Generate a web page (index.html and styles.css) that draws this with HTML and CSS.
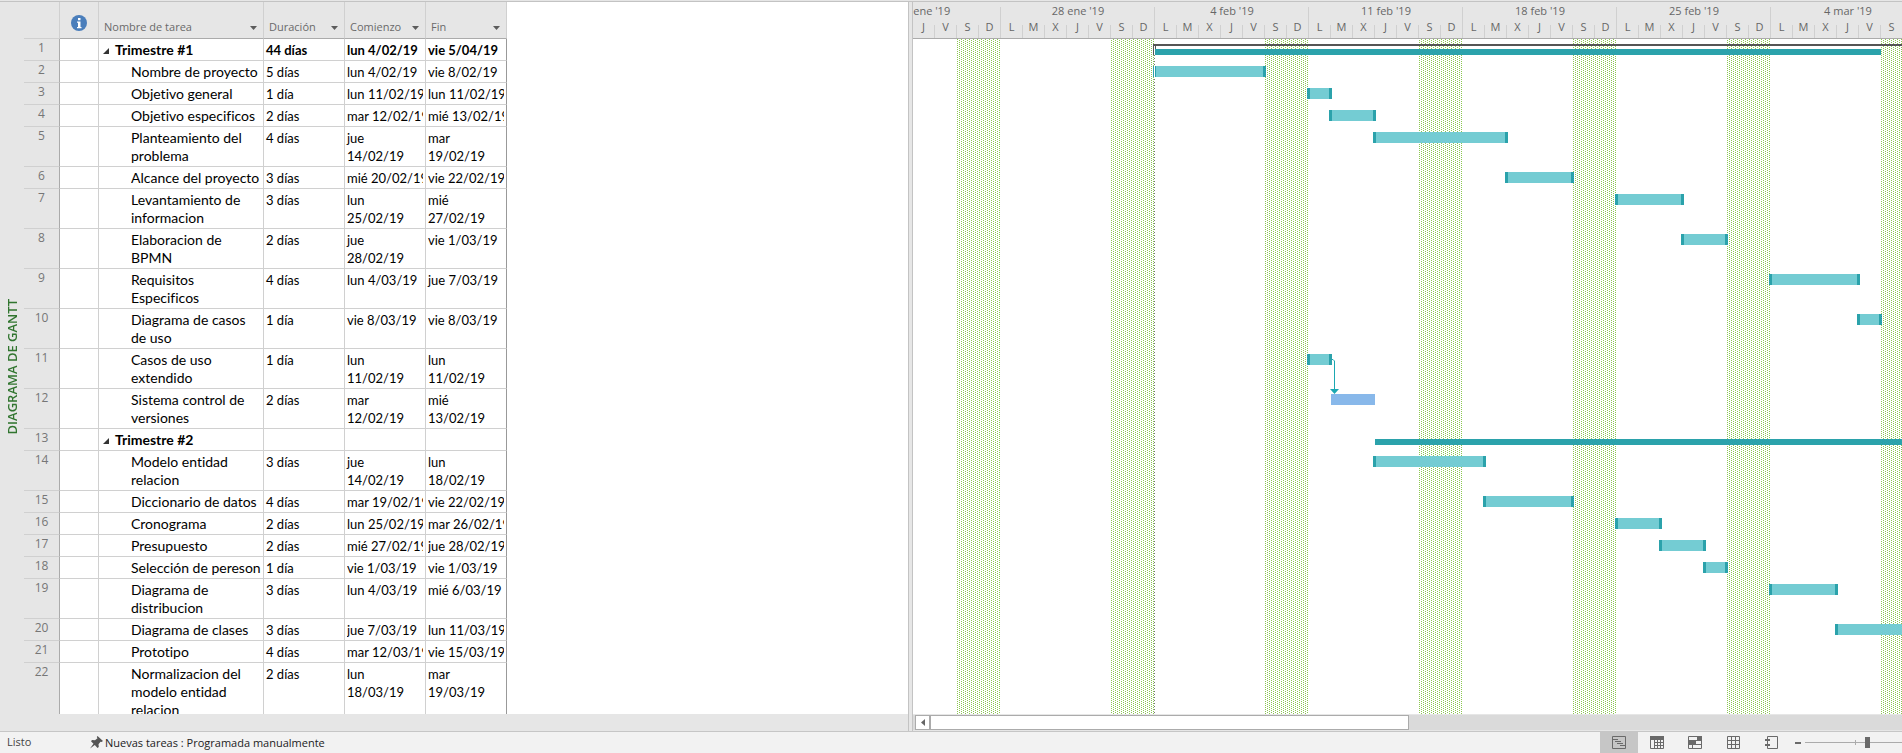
FILE: index.html
```html
<!DOCTYPE html>
<html lang="es">
<head>
<meta charset="utf-8">
<title>Diagrama de Gantt</title>
<link rel="stylesheet" href="styles.css">
</head>
<body>
<main class="workspace">
  <section class="sheet">
    <div class="view-name"><span>DIAGRAMA DE GANTT</span></div>
    <div class="table-pane">
      <table class="tasks">
        <colgroup><col class="col-id"><col class="col-info"><col class="col-name"><col class="col-date"><col class="col-date"><col class="col-date"></colgroup>
        <thead>
          <tr>
            <th></th>
            <th class="info"><svg width="16" height="16" viewBox="0 0 16 16" role="img" aria-label="Indicadores"><circle cx="8" cy="8" r="8" fill="#4a7ebb"/><path d="M7 3h2.500v2.300H7zM6 6.500h3.500v5.500h1v1.200H6V12h1V7.700H6z" fill="#fff"/></svg></th>
            <th><button class="head">Nombre de tarea<svg width="7" height="4"><path d="M0 0h7L3.500 4z"/></svg></button></th>
            <th><button class="head">Duración<svg width="7" height="4"><path d="M0 0h7L3.500 4z"/></svg></button></th>
            <th><button class="head">Comienzo<svg width="7" height="4"><path d="M0 0h7L3.500 4z"/></svg></button></th>
            <th><button class="head">Fin<svg width="7" height="4"><path d="M0 0h7L3.500 4z"/></svg></button></th>
          </tr>
        </thead>
        <tbody>
          <tr class="single summary"><th>1</th><td></td><td><svg class="fold" width="6" height="6"><path d="M6 0v6H0z"/></svg>Trimestre #1</td><td>44 días</td><td>lun 4/02/19</td><td>vie 5/04/19</td></tr>
          <tr class="single"><th>2</th><td></td><td><div>Nombre de proyecto</div></td><td>5 días</td><td><div>lun 4/02/19</div></td><td><div>vie 8/02/19</div></td></tr>
          <tr class="single"><th>3</th><td></td><td><div>Objetivo general</div></td><td>1 día</td><td><div>lun 11/02/19</div></td><td><div>lun 11/02/19</div></td></tr>
          <tr class="single"><th>4</th><td></td><td><div>Objetivo especificos</div></td><td>2 días</td><td><div>mar 12/02/19</div></td><td><div>mié 13/02/19</div></td></tr>
          <tr><th>5</th><td></td><td>Planteamiento del problema</td><td>4 días</td><td>jue 14/02/19</td><td>mar 19/02/19</td></tr>
          <tr class="single"><th>6</th><td></td><td><div>Alcance del proyecto</div></td><td>3 días</td><td><div>mié 20/02/19</div></td><td><div>vie 22/02/19</div></td></tr>
          <tr><th>7</th><td></td><td>Levantamiento de informacion</td><td>3 días</td><td>lun 25/02/19</td><td>mié 27/02/19</td></tr>
          <tr><th>8</th><td></td><td>Elaboracion de BPMN</td><td>2 días</td><td>jue 28/02/19</td><td>vie 1/03/19</td></tr>
          <tr><th>9</th><td></td><td>Requisitos Especificos</td><td>4 días</td><td>lun 4/03/19</td><td>jue 7/03/19</td></tr>
          <tr><th>10</th><td></td><td>Diagrama de casos de uso</td><td>1 día</td><td>vie 8/03/19</td><td>vie 8/03/19</td></tr>
          <tr><th>11</th><td></td><td>Casos de uso extendido</td><td>1 día</td><td>lun 11/02/19</td><td>lun 11/02/19</td></tr>
          <tr><th>12</th><td></td><td>Sistema control de versiones</td><td>2 días</td><td>mar 12/02/19</td><td>mié 13/02/19</td></tr>
          <tr class="single summary"><th>13</th><td></td><td><svg class="fold" width="6" height="6"><path d="M6 0v6H0z"/></svg>Trimestre #2</td><td></td><td></td><td></td></tr>
          <tr><th>14</th><td></td><td>Modelo entidad relacion</td><td>3 días</td><td>jue 14/02/19</td><td>lun 18/02/19</td></tr>
          <tr class="single"><th>15</th><td></td><td><div>Diccionario de datos</div></td><td>4 días</td><td><div>mar 19/02/19</div></td><td><div>vie 22/02/19</div></td></tr>
          <tr class="single"><th>16</th><td></td><td><div>Cronograma</div></td><td>2 días</td><td><div>lun 25/02/19</div></td><td><div>mar 26/02/19</div></td></tr>
          <tr class="single"><th>17</th><td></td><td><div>Presupuesto</div></td><td>2 días</td><td><div>mié 27/02/19</div></td><td><div>jue 28/02/19</div></td></tr>
          <tr class="single"><th>18</th><td></td><td><div>Selección de pereson</div></td><td>1 día</td><td><div>vie 1/03/19</div></td><td><div>vie 1/03/19</div></td></tr>
          <tr><th>19</th><td></td><td>Diagrama de distribucion</td><td>3 días</td><td>lun 4/03/19</td><td>mié 6/03/19</td></tr>
          <tr class="single"><th>20</th><td></td><td><div>Diagrama de clases</div></td><td>3 días</td><td><div>jue 7/03/19</div></td><td><div>lun 11/03/19</div></td></tr>
          <tr class="single"><th>21</th><td></td><td><div>Prototipo</div></td><td>4 días</td><td><div>mar 12/03/19</div></td><td><div>vie 15/03/19</div></td></tr>
          <tr><th>22</th><td></td><td>Normalizacion del modelo entidad relacion</td><td>2 días</td><td>lun 18/03/19</td><td>mar 19/03/19</td></tr>
        </tbody>
      </table>
    </div>
    <div class="sheet-foot"></div>
  </section>

  <div class="splitter"></div>

  <section class="chart">
    <div class="timescale">
      <div class="week"><b>21 ene '19</b><i>L</i><i>M</i><i>X</i><i>J</i><i>V</i><i>S</i><i>D</i></div>
      <div class="week"><b>28 ene '19</b><i>L</i><i>M</i><i>X</i><i>J</i><i>V</i><i>S</i><i>D</i></div>
      <div class="week"><b>4 feb '19</b><i>L</i><i>M</i><i>X</i><i>J</i><i>V</i><i>S</i><i>D</i></div>
      <div class="week"><b>11 feb '19</b><i>L</i><i>M</i><i>X</i><i>J</i><i>V</i><i>S</i><i>D</i></div>
      <div class="week"><b>18 feb '19</b><i>L</i><i>M</i><i>X</i><i>J</i><i>V</i><i>S</i><i>D</i></div>
      <div class="week"><b>25 feb '19</b><i>L</i><i>M</i><i>X</i><i>J</i><i>V</i><i>S</i><i>D</i></div>
      <div class="week"><b>4 mar '19</b><i>L</i><i>M</i><i>X</i><i>J</i><i>V</i><i>S</i><i>D</i></div>
    </div>
    <div class="plot">
      <div class="weekends"></div>
      <div class="start-line"></div>
      <div class="lane"><div class="project"></div><div class="total" style="--day:11;--days:33"></div></div>
      <div class="lane"><div class="bar first" style="--day:11;--days:5"></div></div>
      <div class="lane"><div class="bar" style="--day:18;--days:1"></div></div>
      <div class="lane"><div class="bar" style="--day:19;--days:2"></div></div>
      <div class="lane tall"><div class="bar" style="--day:21;--days:6"></div></div>
      <div class="lane"><div class="bar" style="--day:27;--days:3"></div></div>
      <div class="lane tall"><div class="bar" style="--day:32;--days:3"></div></div>
      <div class="lane tall"><div class="bar" style="--day:35;--days:2"></div></div>
      <div class="lane tall"><div class="bar" style="--day:39;--days:4"></div></div>
      <div class="lane tall"><div class="bar" style="--day:43;--days:1"></div></div>
      <div class="lane tall"><div class="bar" style="--day:18;--days:1"><svg class="link" width="12" height="36" viewBox="-4 0 12 36"><path d="M0 .5h1l1.500 1.500V31" fill="none" stroke="#1ba8b2"/><path d="M-2 30h9L2.500 35z" fill="#1ba8b2"/></svg></div></div>
      <div class="lane tall"><div class="bar manual" style="--day:19;--days:2"></div></div>
      <div class="lane"><div class="total" style="--day:21;--days:40"></div></div>
      <div class="lane tall"><div class="bar" style="--day:21;--days:5"></div></div>
      <div class="lane"><div class="bar" style="--day:26;--days:4"></div></div>
      <div class="lane"><div class="bar" style="--day:32;--days:2"></div></div>
      <div class="lane"><div class="bar" style="--day:34;--days:2"></div></div>
      <div class="lane"><div class="bar" style="--day:36;--days:1"></div></div>
      <div class="lane tall"><div class="bar" style="--day:39;--days:3"></div></div>
      <div class="lane"><div class="bar" style="--day:42;--days:5"></div></div>
    </div>
    <div class="scroller">
      <button aria-label="Anterior"><svg width="4" height="7"><path d="M4 0v7L0 3.500z"/></svg></button>
      <div class="thumb"></div>
      <button class="next" aria-label="Siguiente"><svg width="4" height="7"><path d="M0 0v7l4-3.500z"/></svg></button>
    </div>
  </section>
</main>

<footer class="status">
  <span class="ready">Listo</span>
  <button class="mode"><svg width="13" height="13" viewBox="0 0 13 13"><path d="M7.500 0 13 5l-1.500 1-1-.3L8.500 8.300 8.800 11 7.500 12 4.800 9 0 12.500 3.500 7.800 1 5.200l1-1.200 3 .2 2.500-2L6.800 1z" fill="#555"/></svg>Nuevas tareas : Programada manualmente</button>
  <nav class="views">
    <button class="on" aria-label="Diagrama de Gantt"><svg width="14" height="13"><path d="M.5.500h13v12H.5zM1 3.500h5M3 5.500h6M5 7.500h6M8 9.500h5"/></svg></button>
    <button aria-label="Uso de tareas"><svg width="14" height="13"><path d="M.5.500h13v12H.5zM4.500 4v9M7.500 4v9M10.500 4v9M4 6.500h10M4 9.500h10"/><path class="solid" d="M0 0h14v4H0z"/></svg></button>
    <button aria-label="Organizador de equipo"><svg width="14" height="13"><path d="M.5.500h13v12H.5zM1 4.500h12M1 8.500h12M4.500 9v4"/><path class="solid" d="M9 0h5v5H9zM0 4h8v5H0z"/></svg></button>
    <button aria-label="Hoja de recursos"><svg width="13" height="13"><path d="M.5.500h12v12H.5zM4.500 0v13M8.500 0v13M0 4.500h13M0 8.500h13"/></svg></button>
    <button aria-label="Informe"><svg width="13" height="13"><path d="M2.500.500h10v12h-10z"/><path class="solid" d="M0 3h5v2H0zM0 8h5v2H0z"/></svg></button>
  </nav>
  <button class="minus" aria-label="Alejar"></button>
  <input class="zoom" type="range" min="0" max="100" value="65" aria-label="Zoom">
</footer>
</body>
</html>
```
FILE: styles.css
```css
* { box-sizing: border-box; }
body {
  margin: 0;
  height: 100vh;
  display: flex;
  flex-direction: column;
  overflow: hidden;
  background: #e6e6e6;
  color: #000;
  font: 11px "Open Sans", "Noto Sans", sans-serif;
  font-variant-ligatures: none;
}
button { border: 0; padding: 0; background: none; color: inherit; font: inherit; }
svg { display: block; flex: none; }

.workspace {
  flex: 1;
  min-height: 0;
  margin-top: 1px;
  border-top: 1px solid #c3c3c3;
  border-bottom: 1px solid #c6c6c6;
  display: grid;
  grid-template: minmax(0, 1fr) / minmax(0, 909px) 3px minmax(0, 1fr);
}

/* Task sheet */
.sheet {
  display: grid;
  grid-template: minmax(0, 1fr) 17px / 24px minmax(0, 1fr);
  border-right: 1px solid #c3c3c3;
}
.view-name { grid-row: span 2; display: grid; place-items: center; color: #31752f; font-size: 13px; font-weight: 600; }
.view-name span { writing-mode: vertical-rl; transform: rotate(180deg); white-space: nowrap; }
.table-pane { overflow: hidden; background: #fff; }
.tasks { table-layout: fixed; width: 483px; border-spacing: 0; }
.col-id { width: 36px; }
.col-info { width: 39px; }
.col-name { width: 165px; }
.col-date { width: 81px; }
.tasks thead th {
  height: 37px;
  padding: 0;
  background: #e6e6e6;
  border-right: 1px solid #d0d0d0;
  border-bottom: 1px solid #ababab;
  font-weight: 400;
  color: #6a6a6a;
}
.tasks thead th:first-child { border-bottom-color: #d0d0d0; }
.info svg { margin: 6px auto 0; }
.head { display: flex; align-items: center; justify-content: space-between; width: 100%; padding: 12px 6px 0 5px; }
.head svg { fill: #5c5c5c; margin-top: 4px; }
.tasks tbody th {
  padding: 0;
  background: #e6e6e6;
  border-right: 1px solid #ababab;
  border-bottom: 1px solid #d0d0d0;
  font: 12px/18px "Open Sans", sans-serif;
  color: #767676;
  text-align: center;
  vertical-align: top;
}
.tasks td {
  padding: 2px 2px 1px 2px;
  border-right: 1px solid #d0d0d0;
  border-bottom: 1px solid #d0d0d0;
  font-family: Lato, "Open Sans", sans-serif;
  font-size: 13px;
  line-height: 18px;
  vertical-align: top;
}
.tasks td:nth-child(3) { padding-left: 32px; font-size: 14px; }
.tasks td:last-child { border-right-color: #999; }
.tasks td div { overflow: hidden; }
.tasks .single td { white-space: nowrap; }
.tasks .summary td { font-weight: 700; }
.tasks .summary td:nth-child(3) { padding-left: 4px; }
.fold { display: inline-block; margin-right: 6px; vertical-align: 1px; fill: #333; }

/* Chart */
.splitter { background: #e6e6e6; }
.chart {
  display: grid;
  grid-template-rows: 37px minmax(0, 1fr) 17px;
  border-left: 1px solid #c3c3c3;
  overflow: hidden;
}
.timescale { display: flex; margin-left: -66px; border-bottom: 1px solid #ababab; color: #666; }
.week {
  flex: none;
  display: grid;
  grid-template: 19px 13px / repeat(7, 22px);
  padding-top: 4px;
  text-align: center;
  background: linear-gradient(#d0d0d0, #d0d0d0) right bottom / 1px 31px no-repeat;
}
.week b { grid-column: span 7; font-weight: 400; line-height: 9px; }
.week i { font-style: normal; line-height: 3px; border-right: 1px solid #d0d0d0; }
.plot { position: relative; background: #fff; overflow: hidden; }
.weekends {
  position: absolute;
  inset: 0;
  background:
    conic-gradient(from 0deg at 1px 1px, transparent 75%, #8cc751 0) 0 0 / 4px 2px,
    conic-gradient(from 0deg at 1px 1px, transparent 75%, #8cc751 0) 2px 1px / 4px 2px;
  mask: repeating-linear-gradient(90deg, transparent 0 44px, #000 44px 87px, transparent 87px 154px);
}
.start-line {
  position: absolute;
  top: 16px;
  bottom: 0;
  left: 241px;
  width: 1px;
  background: repeating-linear-gradient(#777 0 1px, #fff 1px 3px);
}
.lane { position: relative; height: 22px; padding-top: 5px; }
.lane.tall { height: 40px; }
.bar {
  position: relative;
  height: 11px;
  margin-left: calc(var(--day) * 22px - 2px);
  width: calc(var(--days) * 22px + 3px);
  background: #74ccd3;
  border: solid #2ba2ab;
  border-width: 0 3px;
}
.bar.first { border-left: 0; background: linear-gradient(90deg, #2ba2ab 1px, #fff 1px 2px, #2ba2ab 2px 3px, #74ccd3 3px); }
.bar.manual { border: 0; background: #88b8ea; margin-left: calc(var(--day) * 22px); width: calc(var(--days) * 22px); }
.total {
  position: relative;
  height: 6px;
  margin: 5px 0 0 calc(var(--day) * 22px);
  width: calc(var(--days) * 22px);
  background: #2ba2ab;
}
.project {
  position: absolute;
  top: 5px;
  left: 240px;
  right: 0;
  height: 11px;
  border-top: 2px solid #555;
  background: linear-gradient(90deg, #555 1px, #fff 1px 2px, #555 2px 3px, transparent 3px);
}
.link { position: absolute; left: calc(100% - 1px); top: 5px; overflow: visible; }

.scroller { display: flex; padding: 1px 0 1px 2px; background: linear-gradient(#dadada, #dadada) 0 1px / 100% 15px no-repeat #e6e6e6; }
.scroller button, .thumb { background: #fff; border: 1px solid #ababab; }
.scroller button { width: 15px; display: grid; place-items: center; }
.scroller svg { fill: #666; }
.thumb { width: 479px; }
.scroller .next { margin-left: auto; }

/* Status bar */
.status { flex: none; height: 21px; display: flex; background: #f2f2f2; color: #444; line-height: 19px; }
.ready { width: 90px; padding-left: 7px; }
.mode { display: flex; align-items: center; gap: 2px; color: #222; }
.views { display: flex; margin-left: auto; }
.views button { width: 38px; display: grid; place-items: center; }
.views .on { background: #c6c6c6; }
.views svg { fill: none; stroke: #6a6a6a; }
.views .solid { fill: #6a6a6a; stroke: none; }
.minus { width: 12px; margin-right: 3px; background: linear-gradient(#6a6a6a, #6a6a6a) right 1px center / 6px 2px no-repeat; }
.zoom {
  appearance: none;
  width: 97px;
  height: 21px;
  margin: 0;
  background:
    linear-gradient(#ababab, #ababab) 50px center / 1px 5px no-repeat,
    linear-gradient(#ababab, #ababab) 0 center / 100% 1px no-repeat;
}
.zoom::-webkit-slider-thumb { appearance: none; width: 5px; height: 11px; background: #6a6a6a; }
```
